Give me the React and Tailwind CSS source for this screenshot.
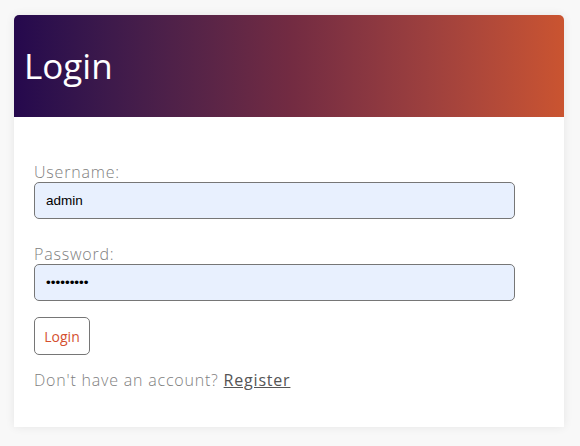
import React from 'react';

const App = () => {
  return (
    <div className="min-h-[446px] w-[580px] bg-[#f8f8f8] pt-[15px] font-['Open_Sans',sans-serif]">
      <div className="mx-[14px] w-[550px] bg-white shadow-[0_0_10px_rgba(0,0,0,0.08)] rounded-t-[5px]">
        <div className="flex h-[102px] items-center rounded-t-[5px] bg-gradient-to-r from-[#25084d] via-[#722b42] to-[#ca5430] px-[10px]">
          <h1 className="pt-[1px] text-[35px] font-normal text-white">Login</h1>
        </div>
        <form className="px-[20px] pt-[45px] pb-[36px]">
          <label className="block text-[16px] font-light leading-[20px] tracking-[0.8px] text-[#808080]">Username:</label>
          <input
            type="text"
            defaultValue="admin"
            className="block h-[37px] w-[481px] rounded-[5px] border border-[#767676] bg-[#e8f0fe] px-[11px] font-['Liberation_Sans',sans-serif] text-[13.5px] text-black outline-none"
          />
          <label className="mt-[25px] block text-[16px] font-light leading-[20px] tracking-[0.8px] text-[#808080]">Password:</label>
          <input
            type="password"
            defaultValue="password1"
            className="block h-[37px] w-[481px] rounded-[5px] border border-[#767676] bg-[#e8f0fe] px-[11px] font-['Liberation_Sans',sans-serif] text-[13.5px] text-black outline-none"
          />
          <button
            type="button"
            className="mt-[16px] flex h-[38px] w-[56px] items-center justify-center rounded-[5px] border border-[#767676] bg-white text-[14px] text-[#d4502f]"
          >
            Login
          </button>
          <p className="mt-[14px] text-[16px] font-light leading-[22px] tracking-[0.8px] text-[#808080]">
            Don't have an account?{' '}
            <a href="#" className="font-normal text-[#555] underline">Register</a>
          </p>
        </form>
      </div>
    </div>
  );
};

export default App;
